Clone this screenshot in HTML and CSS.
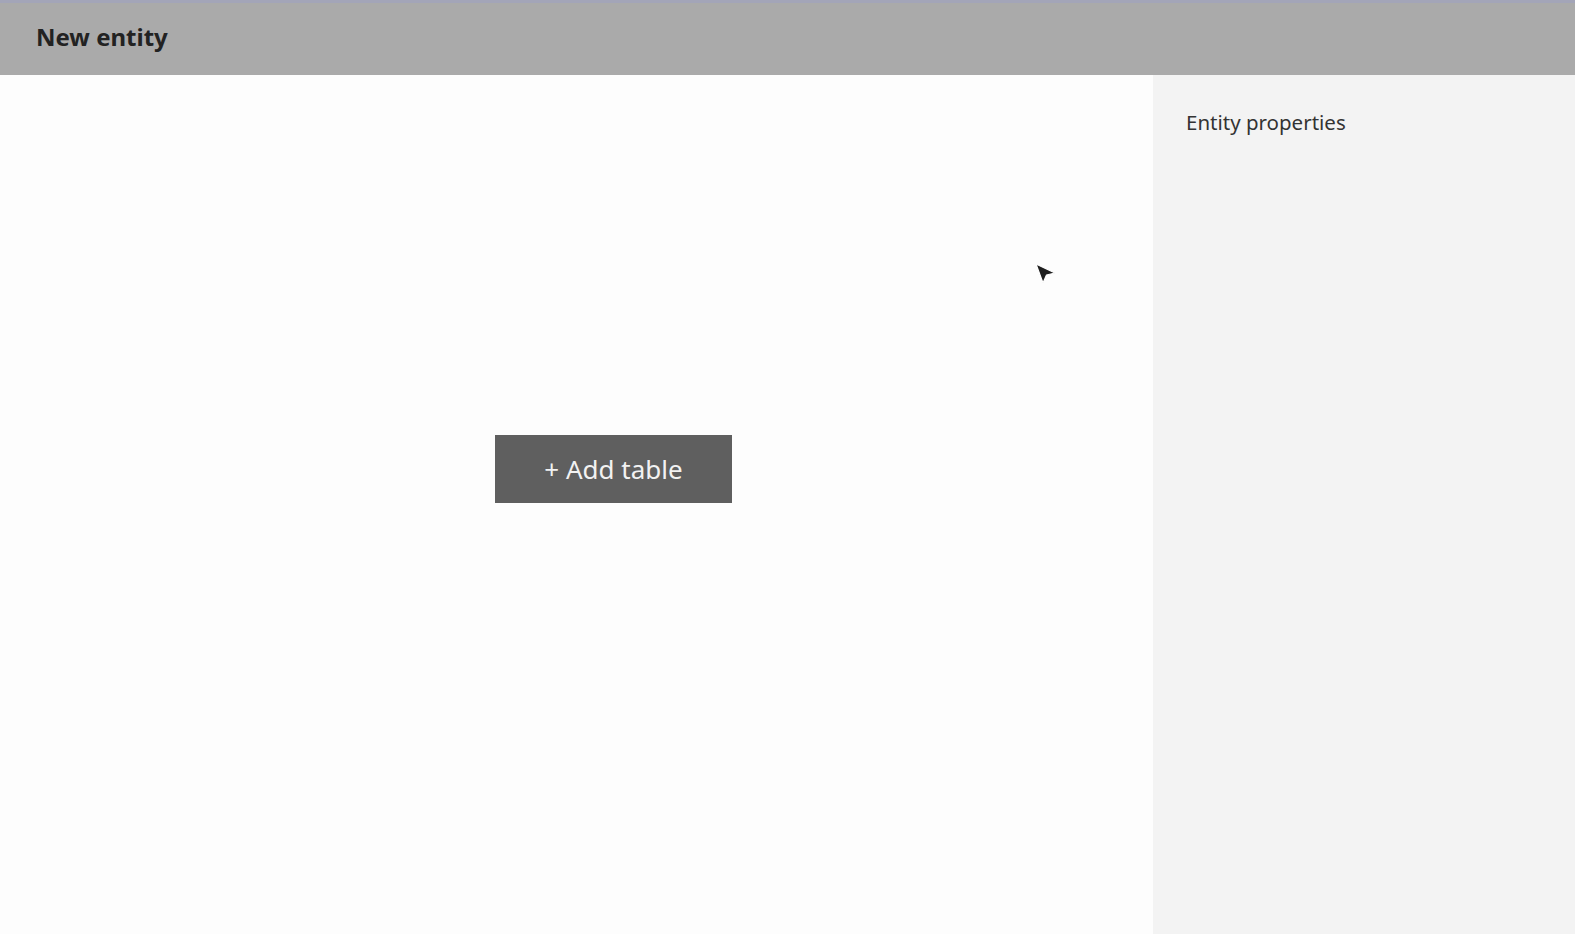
FILE: index.html
```html
<!DOCTYPE html>
<html>
	<head>
		<meta charset="utf-8" />
		<link rel="stylesheet" href="styles.css">
		<title>New entity</title>
	</head>
	<body>
		<div class="hd">
			<h1>New entity</h1>
		</div>
		<div class="main">
			<div class="canvas">
				<button class="add-table">+ Add table</button>
				<svg class="cursor" width="26" height="26" viewBox="0 0 26 26">
					<path d="M3 2 L22 11 L13.5 13 L10 21 Z" fill="#1e1e1e" stroke="#fff" stroke-width="1.2" stroke-linejoin="round"/>
				</svg>
			</div>
			<div class="side">
				<h2>Entity properties</h2>
			</div>
		</div>
	</body>
</html>
```

FILE: styles.css
```css
body,html{
	margin:0;
	padding:0;
	height:100%;
	font-family:"Noto Sans", Roboto, Arial, sans-serif;
	background-color:#fdfdfd;
}
body{
	display:flex;
	flex-direction:column;
	overflow:hidden;
}
h1,h2{
	margin:0;
	padding:0;
}
.hd{
	height:72px;
	border-top:3px solid #a3a5b8;
	background-color:#aaaaaa;
	display:flex;
	align-items:center;
	padding-left:36px;
	box-sizing:content-box;
}
.hd h1{
	font-size:24px;
	font-weight:bold;
	color:#222;
	margin-top:-6px;
}
.main{
	flex:1;
	display:flex;
}
.canvas{
	flex:1;
	position:relative;
	padding:360px 0 0 495px;
	background-color:#fdfdfd;
}
.add-table{
	width:237px;
	height:68px;
	border:0;
	background-color:#5f5f5f;
	color:#f2f2f2;
	font-family:"Noto Sans", Roboto, Arial, sans-serif;
	font-size:26px;
	padding:0;
	cursor:pointer;
}
.cursor{
	position:absolute;
	left:1033px;
	top:187px;
}
.side{
	width:389px;
	background-color:#f3f3f3;
	padding:33px 0 0 33px;
}
.side h2{
	font-size:20.5px;
	font-weight:normal;
	color:#333;
}
```
